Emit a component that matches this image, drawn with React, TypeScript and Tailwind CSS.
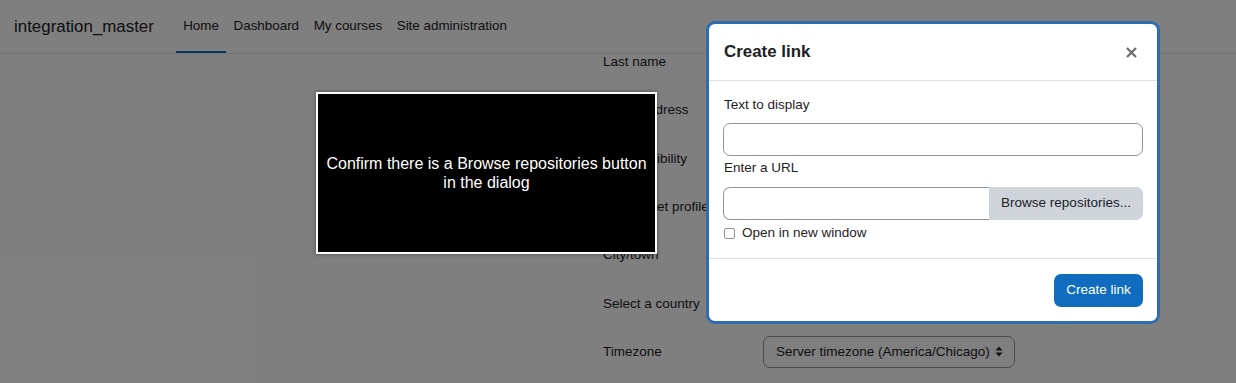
import React from "react";

const labels = [
  "Last name",
  "Email address",
  "Email visibility",
  "MoodleNet profile",
  "City/town",
  "Select a country",
  "Timezone",
];

function Field({ index }: { index: number }) {
  if (index === 6) {
    return (
      <div className="flex h-8 w-[252px] items-center justify-between whitespace-nowrap rounded-[7px] border border-[#8f959e] bg-white pl-[12px] pr-[11px] text-[13.5px] text-[#1d2125]">
        <span>Server timezone (America/Chicago)</span>
        <svg width="8" height="11" viewBox="0 0 8 11" className="ml-1 shrink-0">
          <path d="M4 0.5 L7.5 4.5 L0.5 4.5 Z" fill="#1d2125" />
          <path d="M4 10.5 L7.5 6.5 L0.5 6.5 Z" fill="#1d2125" />
        </svg>
      </div>
    );
  }
  return <div className="h-8 w-[252px] rounded-[7px] border border-[#8f959e] bg-white" />;
}

export default function App() {
  return (
    <div
      className="relative h-[383px] w-full overflow-hidden bg-white text-[#1d2125]"
      style={{ fontFamily: '"Liberation Sans", Arial, sans-serif' }}
    >
      {/* Navbar */}
      <div className="flex h-[54px] items-stretch border-b border-[#e6e6e6] bg-white pl-[14px]">
        <div className="flex items-center text-[16.9px] text-[#1d2125]">integration_master</div>
        <nav className="ml-[22px] flex items-stretch text-[13.4px]">
          <div className="flex items-center border-b-2 border-[#0f6cbf] px-[7.3px] pt-[2px]">Home</div>
          <div className="flex items-center px-[7.3px]">Dashboard</div>
          <div className="flex items-center px-[7.3px]">My courses</div>
          <div className="flex items-center px-[7.3px]">Site administration</div>
        </nav>
      </div>

      {/* Form content */}
      <div className="flex flex-col gap-[32.33px] pl-[603px] text-[13.5px]">
        {labels.map((l, i) => (
          <div key={l} className="flex h-4 items-center">
            <div className="w-[160px] leading-4">{l}</div>
            <Field index={i} />
          </div>
        ))}
      </div>

      {/* Backdrop */}
      <div className="absolute inset-0 bg-black/50" />

      {/* Caption overlay */}
      <div className="absolute left-[316px] top-[92px] flex h-[162px] w-[341px] items-center justify-center border-2 border-white bg-black text-center text-[16px] leading-[19px] text-white shadow-[0_0_4px_rgba(0,0,0,0.4)]">
        <span>
          Confirm there is a Browse repositories button
          <br />
          in the dialog
        </span>
      </div>

      {/* Dialog */}
      <div className="absolute left-[706px] top-[21px] flex h-[303px] w-[454px] flex-col rounded-[9px] border-[3px] border-[#2e6db0] bg-white">
        <div className="flex h-[57px] shrink-0 items-center justify-between border-b border-[#dee2e6] pl-[15px] pr-[20px]">
          <div className="text-[16.9px] font-bold text-[#1d2125]">Create link</div>
          <svg width="11" height="11" viewBox="0 0 11 11">
            <path d="M1 1 L10 10 M10 1 L1 10" stroke="#6e6e6e" strokeWidth="2.3" strokeLinecap="butt" />
          </svg>
        </div>
        <div className="flex flex-col border-b border-[#dee2e6] px-[14px] pb-[15px] pt-[14px] text-[13.5px] text-[#1d2125]">
          <div className="mb-[8px] pl-[1px] leading-[20px]">Text to display</div>
          <div className="h-[33px] w-full rounded-[7px] border border-[#8f959e] bg-white" />
          <div className="mb-[9px] mt-[2px] pl-[1px] leading-[20px]">Enter a URL</div>
          <div className="flex h-[33px] w-full">
            <div className="h-full flex-1 rounded-l-[7px] border border-r-0 border-[#8f959e] bg-white" />
            <div className="flex h-full w-[154px] items-center justify-center rounded-r-[7px] bg-[#ced4da] text-[#1d2125]">
              Browse repositories...
            </div>
          </div>
          <div className="mt-[3px] flex h-[20px] items-center pl-[1px]">
            <div className="h-[11px] w-[11px] rounded-[2px] border border-[#8f959e] bg-white" />
            <span className="ml-[7px]">Open in new window</span>
          </div>
        </div>
        <div className="flex flex-1 items-center justify-end pr-[14px]">
          <div className="flex h-[33px] w-[89px] items-center justify-center rounded-[7px] bg-[#0f6cbf] text-[13.5px] text-white">
            Create link
          </div>
        </div>
      </div>
    </div>
  );
}
